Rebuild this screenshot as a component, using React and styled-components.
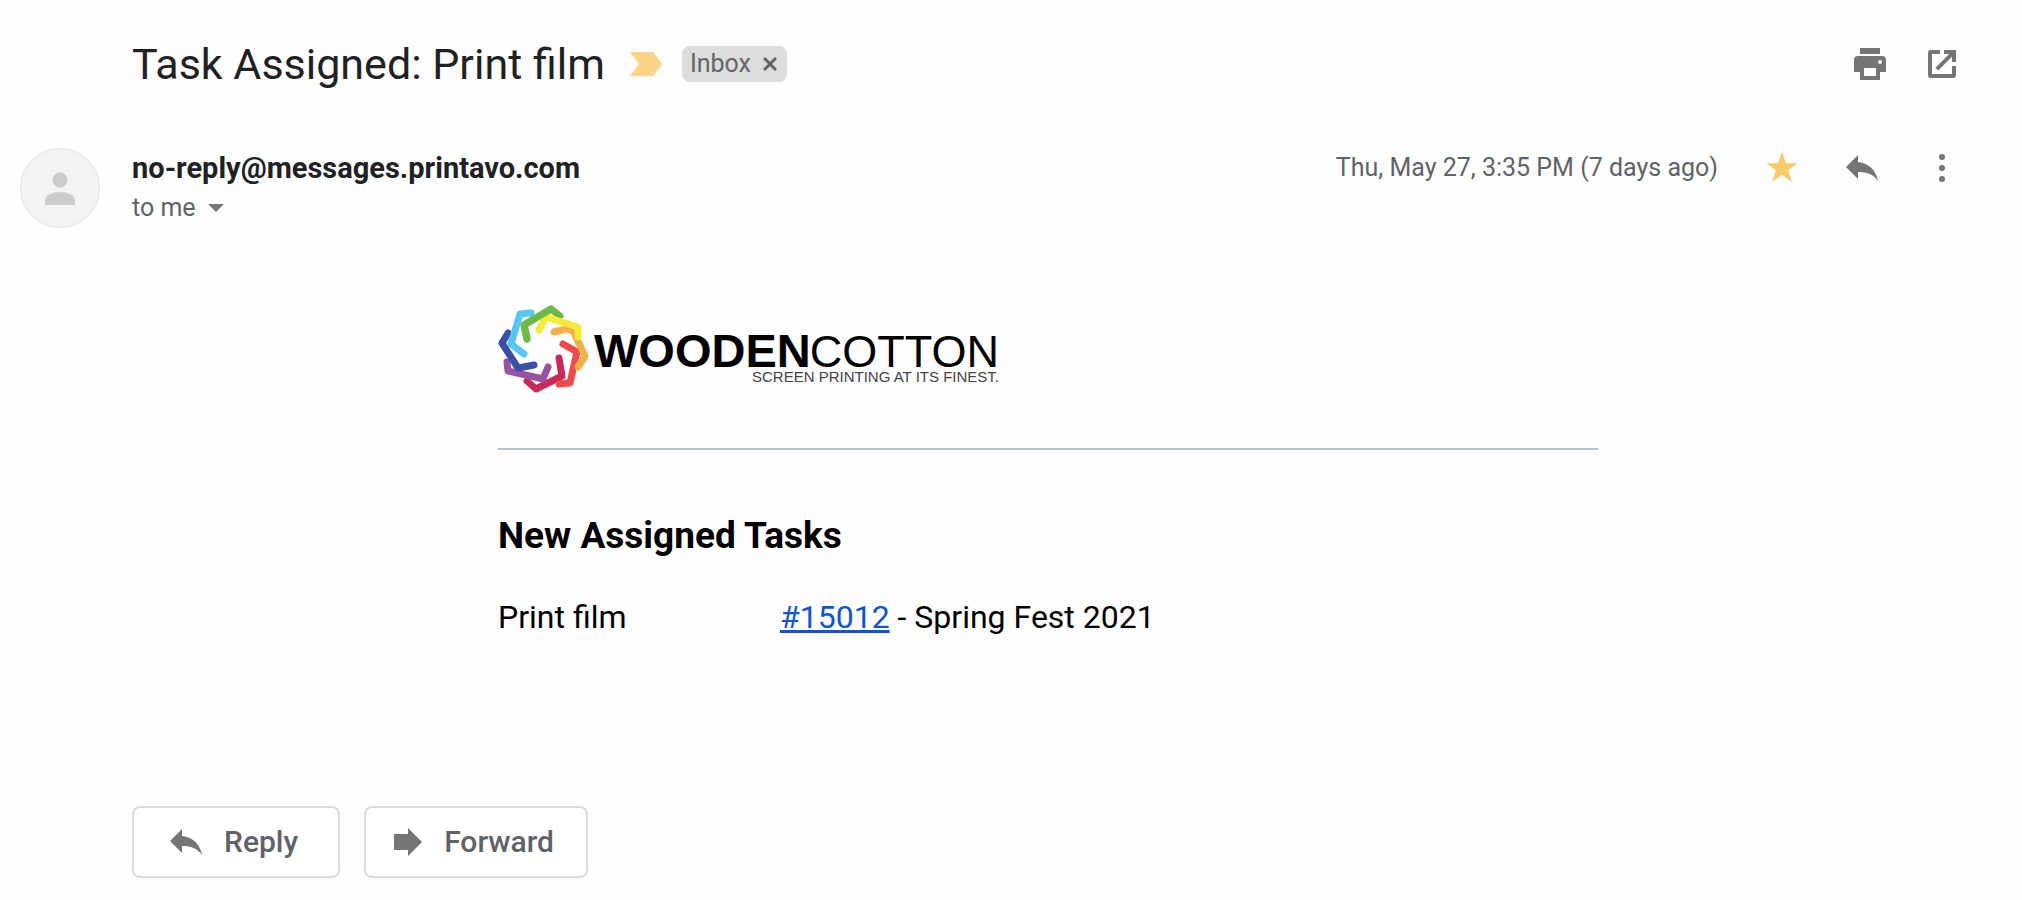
import React from 'react';
import styled, { createGlobalStyle } from 'styled-components';

const GlobalStyle = createGlobalStyle`
  * {
    box-sizing: border-box;
  }

  body {
    margin: 0;
    background: #fefefe;
    color: #202124;
    font-family: Roboto, 'Liberation Sans', sans-serif;
  }

  svg {
    display: block;
    flex-shrink: 0;
  }
`;

const Message = styled.article`
  display: grid;
  grid-template-columns: 80px minmax(0, 1fr);
  column-gap: 32px;
  padding: 32px 58px 20px 20px;
`;

const Header = styled.header`
  grid-column: 2;
  display: flex;
  align-items: center;
  height: 64px;
`;

const Subject = styled.h2`
  margin: 0;
  font-size: 43px;
  font-weight: 400;
  line-height: 56px;
`;

const IconButton = styled.button`
  display: flex;
  justify-content: center;
  min-width: ${props => props.$width || '32px'};
  padding: 0;
  border: 0;
  background: none;
  color: ${props => props.$color || '#757575'};
  cursor: pointer;
`;

const Importance = styled(IconButton)`
  margin: 0 20px 0 25px;
`;

const Label = styled.div`
  display: flex;
  align-items: center;
  gap: 12px;
  height: 36px;
  padding: 0 10px 0 8px;
  border-radius: 8px;
  background: #ddd;
  color: #666;
  font-size: 25px;
  line-height: 36px;
`;

const Tools = styled.div`
  display: flex;
  align-items: center;
  gap: ${props => props.$gap};
  margin-left: auto;
  padding-right: 6px;
`;

const Avatar = styled.div`
  display: flex;
  align-items: center;
  justify-content: center;
  width: 80px;
  height: 80px;
  margin-top: 52px;
  border: 1px solid #e4e4e4;
  border-radius: 50%;
  background: #f4f4f4;
`;

const Details = styled.div`
  display: flex;
  justify-content: space-between;
  align-items: flex-start;
  margin-top: 52px;
`;

const Sender = styled.h3`
  margin: 0;
  font-size: 29px;
  font-weight: 700;
  line-height: 40px;
`;

const Recipient = styled.button`
  display: flex;
  align-items: center;
  gap: 12px;
  padding: 0;
  border: 0;
  background: none;
  color: #5f6368;
  font: 25px/40px Roboto, sans-serif;
`;

const SentAt = styled.time`
  color: #5f6368;
  font-size: 25px;
  line-height: 40px;
`;

const Body = styled.section`
  grid-column: 2;
  width: 100%;
  max-width: 1100px;
  margin: 72px auto 0;
  color: #000;
  font-size: 32px;
`;

const Divider = styled.hr`
  height: 2px;
  margin: 44px 0 60px;
  border: 0;
  background: #b8c1c7;
`;

const Heading = styled.h1`
  margin: 0 0 35px;
  font-size: 37px;
  font-weight: 700;
  line-height: 52px;
`;

const Tasks = styled.table`
  width: 100%;
  border-collapse: collapse;
  line-height: 40px;
`;

const Cell = styled.td`
  width: ${props => props.$width};
  padding: 0;
`;

const TaskLink = styled.a`
  color: #15c;
`;

const Actions = styled.footer`
  grid-column: 2;
  display: flex;
  gap: 24px;
  margin-top: 169px;
`;

const ActionButton = styled.button`
  display: flex;
  align-items: center;
  gap: 22px;
  height: 72px;
  padding: ${props => props.$padding};
  border: 2px solid #dadce0;
  border-radius: 8px;
  background: #fff;
  color: #5f6368;
  font: 500 30px/40px Roboto, sans-serif;

  svg {
    color: #757575;
  }
`;

const PrintIcon = () => (
  <svg width="32" height="32" viewBox="0 0 32 32" fill="currentColor" aria-hidden="true">
    <path
      fillRule="evenodd"
      d="M6 0h20v6H6zM4 8h24a4 4 0 0 1 4 4v12h-6v8H6v-8H0V12a4 4 0 0 1 4-4zm6 12v8h12v-8zM26 12a2 2 0 1 0 0 4 2 2 0 0 0 0-4z"
    />
  </svg>
);

const OpenIcon = () => (
  <svg width="28" height="28" viewBox="0 0 28 28" fill="currentColor" aria-hidden="true">
    <path d="M3 0h9v4H4v20h20v-8h4v9a3 3 0 0 1-3 3H3a3 3 0 0 1-3-3V3a3 3 0 0 1 3-3zM16 0h12v12h-4V6.800L10.200 20.600l-2.800-2.800L21.200 4H16z" />
  </svg>
);

const StarIcon = () => (
  <svg width="32" height="32" viewBox="0 0 32 32" fill="currentColor" aria-hidden="true">
    <path d="M16 0l4 11.200h11.500l-9.300 7 3.800 11.800-10-7.200L6 30l3.800-11.800-9.300-7H12z" />
  </svg>
);

const ReplyIcon = () => (
  <svg width="32" height="26" viewBox="0 0 32 26" fill="currentColor" aria-hidden="true">
    <path d="M12 7V0L0 12l12 12v-7c9 0 15 2 20 9C30 16 24 8.500 12 7z" />
  </svg>
);

const ForwardIcon = () => (
  <svg width="28" height="28" viewBox="0 0 28 28" fill="currentColor" aria-hidden="true">
    <path d="M0 6h14V0l14 14-14 14v-6H0z" />
  </svg>
);

const MoreIcon = () => (
  <svg width="6" height="28" viewBox="0 0 6 28" fill="currentColor" aria-hidden="true">
    <circle cx="3" cy="3" r="3" />
    <circle cx="3" cy="14" r="3" />
    <circle cx="3" cy="25" r="3" />
  </svg>
);

const PersonIcon = () => (
  <svg width="30" height="33" viewBox="0 0 30 33" fill="#ccc" aria-hidden="true">
    <circle cx="15" cy="8" r="7.500" />
    <path d="M0 33v-5c0-5 8-8 15-8s15 3 15 8v5z" />
  </svg>
);

// one arm per colour, each a bracket with rounded ends
const arms = [
  ['#c9285a', 'M69 62L72 80 46 93 37 85'],
  ['#ef4a4b', 'M73 48L87 56 80 87 69 88'],
  ['#f1b04a', 'M64 36L76 33Q83 33 85 39L95 60 88 71'],
  ['#6cba45', 'M37 43L34 29 61 13 70 20'],
  ['#f4eb3a', 'M49 34L56 21 88 31 88 41'],
  ['#9653a3', 'M58 71L53 83 18 75 17 66'],
  ['#3b50a4', 'M44 69L28 72 12 47 18 37'],
  ['#57c7f2', 'M34 58L21 48 30 18 41 17'],
];

const Wordmark = styled.text`
  font-family: 'Liberation Sans', Arial, sans-serif;
  font-size: ${props => props.$size};
  font-weight: ${props => props.$weight || 400};
`;

const Logo = () => (
  <svg width="504" height="104" viewBox="0 0 504 104" role="img" aria-label="WoodenCotton">
    <g
      fill="none"
      strokeWidth="7"
      strokeLinecap="round"
      strokeLinejoin="round"
      transform="translate(-8 -4)"
    >
      {arms.map(([color, d]) => (
        <path key={color} d={d} stroke={color} />
      ))}
      <path d="M37 43L34 29 61 13" stroke="#6cba45" />
    </g>
    <Wordmark x="96" y="67" $size="47px" $weight="700">
      WOODEN
    </Wordmark>
    <Wordmark x="501" y="67" textAnchor="end" $size="45px">
      COTTON
    </Wordmark>
    <Wordmark x="501" y="82" textAnchor="end" fill="#444" $size="15px">
      SCREEN PRINTING AT ITS FINEST.
    </Wordmark>
  </svg>
);

const App = () => (
  <>
    <GlobalStyle />
    <Message>
      <Header>
        <Subject>Task Assigned: Print film</Subject>
        <Importance $color="#fbd485" aria-label="Important">
          <svg width="32" height="24" viewBox="0 0 32 24" fill="currentColor" aria-hidden="true">
            <path d="M0 0h22q1 0 2 1l8 11-8 11q-1 1-2 1H0l9-12z" />
          </svg>
        </Importance>
        <Label>
          Inbox
          <IconButton $color="#666" $width="14px" aria-label="Remove label Inbox">
            <svg width="14" height="14" viewBox="0 0 14 14" stroke="currentColor" strokeWidth="3" aria-hidden="true">
              <path d="M1 1l12 12M13 1L1 13" />
            </svg>
          </IconButton>
        </Label>
        <Tools $gap="40px">
          <IconButton aria-label="Print">
            <PrintIcon />
          </IconButton>
          <IconButton aria-label="Open in new window">
            <OpenIcon />
          </IconButton>
        </Tools>
      </Header>
      <Avatar>
        <PersonIcon />
      </Avatar>
      <Details>
        <div>
          <Sender>no-reply@messages.printavo.com</Sender>
          <Recipient>
            to me
            <svg width="16" height="8" viewBox="0 0 16 8" fill="#757575" aria-hidden="true">
              <path d="M0 0h16L8 8z" />
            </svg>
          </Recipient>
        </div>
        <Tools $gap="48px">
          <SentAt>Thu, May 27, 3:35 PM (7 days ago)</SentAt>
          <IconButton $color="#f7cb69" aria-label="Starred">
            <StarIcon />
          </IconButton>
          <IconButton aria-label="Reply">
            <ReplyIcon />
          </IconButton>
          <IconButton aria-label="More">
            <MoreIcon />
          </IconButton>
        </Tools>
      </Details>
      <Body>
        <Logo />
        <Divider />
        <Heading>New Assigned Tasks</Heading>
        <Tasks>
          <tbody>
            <tr>
              <Cell $width="282px">Print film</Cell>
              <Cell>
                <TaskLink href="#15012">#15012</TaskLink> - Spring Fest 2021
              </Cell>
            </tr>
          </tbody>
        </Tasks>
      </Body>
      <Actions>
        <ActionButton $padding="0 40px 0 36px">
          <ReplyIcon />
          Reply
        </ActionButton>
        <ActionButton $padding="0 32px 0 28px">
          <ForwardIcon />
          Forward
        </ActionButton>
      </Actions>
    </Message>
  </>
);

export default App;
